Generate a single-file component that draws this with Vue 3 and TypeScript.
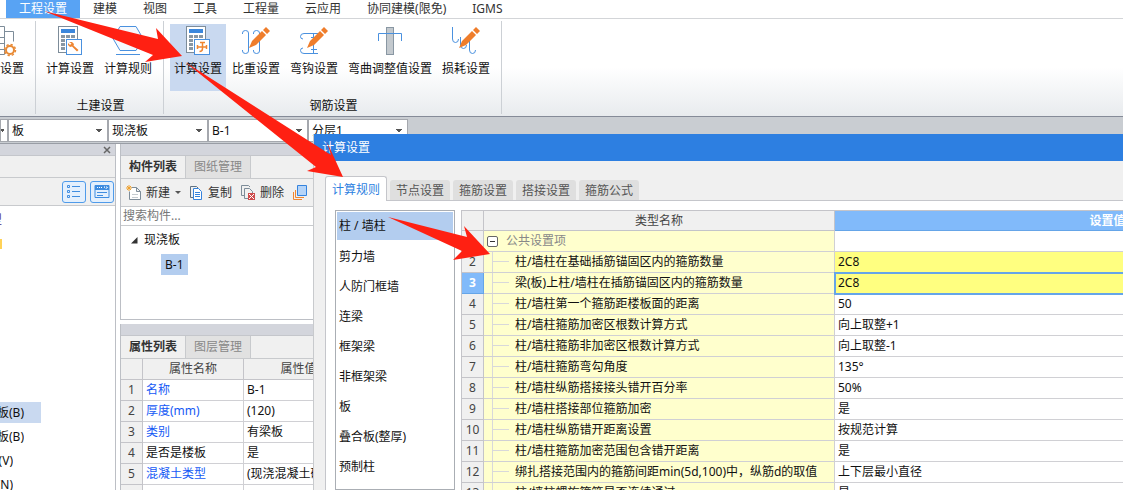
<script setup lang="ts">
import { ref } from 'vue'

const menus = ['工程设置', '建模', '视图', '工具', '工程量', '云应用', '协同建模(限免)', 'IGMS']
const combos = ['板', '现浇板', 'B-1', '分层1']
const members = ['柱 / 墙柱', '剪力墙', '人防门框墙', '连梁', '框架梁', '非框架梁', '板', '叠合板(整厚)', '预制柱']
const dialogTabs = ['计算规则', '节点设置', '箍筋设置', '搭接设置', '箍筋公式']
const activeTab = ref(0)
const activeMember = ref(0)
const search = ref('')

interface Prop { name: string; value: string; link: boolean }
const props: Prop[] = [
  { name: '名称', value: 'B-1', link: true },
  { name: '厚度(mm)', value: '(120)', link: true },
  { name: '类别', value: '有梁板', link: true },
  { name: '是否是楼板', value: '是', link: false },
  { name: '混凝土类型', value: '(现浇混凝土碎石)', link: true },
]

interface Rule { no: number; name: string; value: string }
const rules: Rule[] = [
  { no: 2, name: '柱/墙柱在基础插筋锚固区内的箍筋数量', value: '2C8' },
  { no: 3, name: '梁(板)上柱/墙柱在插筋锚固区内的箍筋数量', value: '2C8' },
  { no: 4, name: '柱/墙柱第一个箍筋距楼板面的距离', value: '50' },
  { no: 5, name: '柱/墙柱箍筋加密区根数计算方式', value: '向上取整+1' },
  { no: 6, name: '柱/墙柱箍筋非加密区根数计算方式', value: '向上取整-1' },
  { no: 7, name: '柱/墙柱箍筋弯勾角度', value: '135°' },
  { no: 8, name: '柱/墙柱纵筋搭接接头错开百分率', value: '50%' },
  { no: 9, name: '柱/墙柱搭接部位箍筋加密', value: '是' },
  { no: 10, name: '柱/墙柱纵筋错开距离设置', value: '按规范计算' },
  { no: 11, name: '柱/墙柱箍筋加密范围包含错开距离', value: '是' },
  { no: 12, name: '绑扎搭接范围内的箍筋间距min(5d,100)中，纵筋d的取值', value: '上下层最小直径' },
  { no: 13, name: '柱/墙柱螺旋箍筋是否连续通过', value: '是' },
]
</script>

<template>
  <div class="app">
    <nav class="menu">
      <button v-for="(m, i) in menus" :key="m" :class="{ on: i === 0 }">{{ m }}</button>
    </nav>

    <div class="ribbon">
      <section class="group first">
        <div class="tools">
          <button class="tool clipped">
            <svg width="48" height="30" viewBox="0 0 48 30" fill="none">
              <path d="M20 1.500h8.500v28H20M28.500 6.500h9v10M20 12.500h8M20 18.500h8M20 24.500h8" stroke="#7d8c99" />
              <circle cx="34" cy="25" r="4" fill="#fff" stroke="#e88a35" stroke-width="2" />
              <circle cx="34" cy="25" r="5.500" stroke="#e88a35" stroke-width="1.500" stroke-dasharray="2.300 2" />
            </svg>
            <span>设置</span>
          </button>
        </div>
      </section>

      <section class="group civil">
        <div class="tools">
          <button class="tool">
            <svg width="30" height="30" viewBox="0 0 30 30">
              <rect x="3.500" y="1.500" width="19" height="26" fill="#fff" stroke="#7d8c99" />
              <rect x="6" y="4" width="14" height="4" fill="#3b87dc" />
              <path d="M6 10h4v3H6zM11 10h4v3h-4zM16 10h4v3h-4zM6 14h4v3H6zM11 14h4v3h-4zM6 18h4v3H6zM6 22h4v3H6z" fill="#8997a3" />
              <rect x="11.500" y="14.500" width="15" height="15" fill="#fff" stroke="#4a91df" />
              <path d="M14 17l3 0 2 2-.5 1.500 5 4.500-1.500 1.500-5-5-2 .5-2-2 0-2 2 2 1.500-1.500z" fill="#ef8632" />
            </svg>
            <span>计算设置</span>
          </button>
          <button class="tool">
            <svg width="30" height="30" viewBox="0 0 30 30" fill="#f6f9fd" stroke="#4a91df">
              <path d="M7 1.500h16l7 12-7 12H7l-7-12z" /><path d="M3 29.500h24" />
            </svg>
            <span>计算规则</span>
          </button>
        </div>
        <h2>土建设置</h2>
      </section>

      <section class="group rebar">
        <div class="tools">
          <button class="tool on">
            <svg width="30" height="30" viewBox="0 0 30 30">
              <rect x="3.500" y="1.500" width="19" height="26" fill="#fff" stroke="#7d8c99" />
              <rect x="6" y="4" width="14" height="4" fill="#3b87dc" />
              <path d="M6 10h4v3H6zM11 10h4v3h-4zM16 10h4v3h-4zM6 14h4v3H6zM11 14h4v3h-4zM6 18h4v3H6zM6 22h4v3H6z" fill="#8997a3" />
              <rect x="11.500" y="14.500" width="15" height="15" fill="#fff" stroke="#4a91df" />
              <path d="M14 22h10M19.500 17.500v6q0 3-3 3M17 17.500h5M14.500 20v4M23.500 20v4" fill="none" stroke="#ef8632" stroke-width="1.500" />
            </svg>
            <span>计算设置</span>
          </button>
          <button class="tool">
            <svg width="30" height="30" viewBox="0 0 30 30" fill="none">
              <path d="M1.500 9V8q0-2.500 3-2.500t3 2.500v18q0 2.500-3 2.500t-3-2.500v-1M12.500 9V8q0-2.500 3-2.500t3 2.500v18q0 2.500-3 2.500t-3-2.500v-1" stroke="#4a91df" />
              <path d="M8 23l3-7L21 6l4 4-10 10zM22 5l3-3 4 4-3 3z" fill="#ef7d2b" />
            </svg>
            <span>比重设置</span>
          </button>
          <button class="tool">
            <svg width="30" height="30" viewBox="0 0 30 30" fill="none">
              <path d="M4 14q-2.500 0-2.500-2.500 0-3 3.500-3h14M4 23q-2.500 0-2.500 2.500 0 3 3.500 3h14M14.500 8v20M12 12.500h6M12 24.500h6" stroke="#4a91df" />
              <path d="M8 23l3-7L21 6l4 4-10 10zM22 5l3-3 4 4-3 3z" fill="#ef7d2b" />
            </svg>
            <span>弯钩设置</span>
          </button>
          <button class="tool">
            <svg width="30" height="30" viewBox="0 0 30 30" fill="none">
              <rect x="11.500" y="2.500" width="7" height="27" fill="#c3c9ce" stroke="#8997a3" />
              <path d="M3.500 16V8.500h23V16" stroke="#4a91df" />
            </svg>
            <span>弯曲调整值设置</span>
          </button>
          <button class="tool">
            <svg width="30" height="30" viewBox="0 0 30 30" fill="none">
              <path d="M1.500 2v12q0 3.500 3 3.500t3-3.500M9.500 12v8q0 3.500 3 3.500t3-3.500M18.500 15v10q0 3.500 3 3.500t3-3.500" stroke="#4a91df" />
              <path d="M8 23l3-7L21 6l4 4-10 10zM22 5l3-3 4 4-3 3z" fill="#ef7d2b" />
            </svg>
            <span>损耗设置</span>
          </button>
        </div>
        <h2>钢筋设置</h2>
      </section>
    </div>

    <div class="combos">
      <select class="stub" aria-label="楼层"><option></option></select>
      <select v-for="c in combos" :key="c" :aria-label="c"><option>{{ c }}</option></select>
    </div>

    <main class="work">
      <aside class="nav-panel">
        <div class="bar">
          <button aria-label="关闭">
            <svg width="6" height="6" viewBox="0 0 6 6" stroke="#666" stroke-width="1.500"><path d="M0 0l6 6M6 0L0 6" /></svg>
          </button>
        </div>
        <div class="strip"></div>
        <div class="view-tools">
          <button aria-label="列表">
            <svg width="14" height="14" viewBox="0 0 14 14" fill="none" stroke="#3f8de0">
              <path d="M.5.5h2v2h-2zM.5 5.500h2v2h-2zM.5 10.500h2v2h-2zM5 1.500h8M5 6.500h8M5 11.500h8" />
            </svg>
          </button>
          <button aria-label="视图">
            <svg width="16" height="14" viewBox="0 0 16 14" fill="none">
              <path d="M1 .5h14v12H1z" stroke="#3f8de0" /><path d="M1 0h14v5H1z" fill="#3f8de0" />
              <path d="M3 7.500h10M3 10.500h6" stroke="#3f8de0" /><path d="M3 2.500h5M10 2h4l-2 2z" stroke="#fff" stroke-dasharray="1 1" />
            </svg>
          </button>
        </div>
        <ul class="nav-top">
          <li class="cut tiny purple"><span>型</span></li>
          <li class="cut tiny"><i></i></li>
        </ul>
        <ul class="nav-tree">
          <li class="on"><span class="cut">板(B)</span></li>
          <li><span class="cut">板(B)</span></li>
          <li><span class="cut short">(V)</span></li>
          <li><span class="cut short">(N)</span></li>
        </ul>
      </aside>

      <div class="middle">
        <section class="panel list">
          <div class="bar"></div>
          <div class="tabs"><button class="on">构件列表</button><button>图纸管理</button></div>
          <div class="tool-row">
            <button>
              <svg width="16" height="16" viewBox="0 0 16 16" fill="none">
                <path d="M5.500 2.500h5l4 4v8h-11v-8M10.500 2.500v4h4" fill="#fff" stroke="#7d8c99" />
                <path d="M6 9.500h6M6 12.500h6" stroke="#c5cbd0" /><path d="M3 0v6M0 3h6M1 1l4 4M5 1L1 5" stroke="#efa12f" />
              </svg>新建<b class="caret"></b>
            </button>
            <button>
              <svg width="14" height="16" viewBox="0 0 14 16" fill="none">
                <path d="M3 12.500H.5v-11h6L8 3" stroke="#5f7182" /><path d="M3.500 3.500h5l3 3v8h-8z" fill="#fff" stroke="#3583dd" />
                <path d="M5 7.500h5M5 9.500h5M5 11.500h5" stroke="#3583dd" />
              </svg>复制
            </button>
            <button>
              <svg width="15" height="16" viewBox="0 0 15 16" fill="none">
                <path d="M3 10.500H.5v-10h7L9 2M7 13.500H3.500v-10h5l3 3v2" stroke="#7d8c99" />
                <path d="M7 8h7v7H7z" fill="#cf4b4b" /><path d="M8 9l5 5M13 9l-5 5" stroke="#fff" />
              </svg>删除
            </button>
            <button aria-label="层间复制">
              <svg width="14" height="15" viewBox="0 0 14 15" fill="none">
                <path d="M.5 7v7.500H9M2.500 5v7.500H11" stroke="#ef8632" /><path d="M4.500.5h9v10h-9z" fill="#b5d4f8" stroke="#3583dd" />
              </svg>
            </button>
          </div>
          <input v-model="search" placeholder="搜索构件..." aria-label="搜索构件" />
          <div class="tree">
            <div class="parent"><svg width="7" height="7" viewBox="0 0 7 7"><path d="M6.500 0v6.500H0z" fill="#333" /></svg>现浇板</div>
            <div><span class="leaf">B-1</span></div>
          </div>
        </section>

        <section class="panel attrs">
          <div class="bar"></div>
          <div class="tabs"><button class="on">属性列表</button><button>图层管理</button></div>
          <table class="grid">
            <colgroup><col class="c-no" /><col class="c-prop" /><col class="c-pval" /></colgroup>
            <thead><tr><th></th><th>属性名称</th><th>属性值</th></tr></thead>
            <tbody>
              <tr v-for="(p, i) in props" :key="p.name">
                <th>{{ i + 1 }}</th><td :class="{ link: p.link }">{{ p.name }}</td><td>{{ p.value }}</td>
              </tr>
              <tr><th></th><td></td><td></td></tr>
            </tbody>
          </table>
        </section>
      </div>
    </main>

    <div class="dialog" role="dialog" aria-labelledby="dlg-title">
      <h1 id="dlg-title">计算设置</h1>
      <div class="dlg-body">
        <div class="dlg-tabs">
          <button v-for="(t, i) in dialogTabs" :key="t" :class="{ on: i === activeTab }" @click="activeTab = i">{{ t }}</button>
        </div>
        <div class="page">
          <ul class="members">
            <li v-for="(m, i) in members" :key="m">
              <button :class="{ on: i === activeMember }" @click="activeMember = i">{{ m }}</button>
            </li>
          </ul>
          <div class="rules-wrap">
            <table class="grid rules">
              <colgroup><col class="c-no" /><col class="c-rule" /><col class="c-val" /></colgroup>
              <thead><tr><th></th><th>类型名称</th><th class="sel">设置值</th></tr></thead>
              <tbody>
                <tr>
                  <th></th>
                  <td class="section"><button aria-label="折叠"></button>公共设置项</td>
                  <td></td>
                </tr>
                <tr v-for="r in rules" :key="r.no" :class="{ changed: r.no < 4, current: r.no === 3 }">
                  <th>{{ r.no }}</th><td class="rule">{{ r.name }}</td><td>{{ r.value }}</td>
                </tr>
              </tbody>
            </table>
          </div>
        </div>
      </div>
    </div>

    <svg class="arrows" width="520" height="270" viewBox="0 0 520 270" fill="#ff2012">
      <path d="M44 11L158 39 156 28 182 56 145 62 153 55z" />
      <path d="M185 62L331 155 327 142 343 177 307 171 316 167z" />
      <path d="M388 217L467 237 464 226 490 254 453 260 462 251z" />
    </svg>
  </div>
</template>

<style>
html, body { margin: 0; overflow: hidden; }
</style>

<style scoped>
.app {
  position: relative; display: flex; flex-direction: column; height: 100vh; overflow: hidden;
  font: 12px/20px "Noto Sans", "Noto Sans CJK SC", sans-serif; color: #111; background: #fff;
}
.app * { box-sizing: border-box; }
button, input, select { font: inherit; color: inherit; margin: 0; padding: 0; border: 0; background: none; border-radius: 0; }
ul { list-style: none; margin: 0; padding: 0; }
h1, h2 { font: inherit; margin: 0; }
svg { flex: none; overflow: visible; }

.menu { display: flex; flex: none; height: 19px; padding-left: 6px; border-bottom: 1px solid #d3d5d8; }
.menu button { padding: 0 13px; line-height: 18px; white-space: nowrap; color: #333; }
.menu .on { background: #58a3f4; color: #fff; }

.ribbon { display: flex; flex: none; height: 98px; background: linear-gradient(#fff 50%, #e8ebee); border-bottom: 1px solid #858b98; }
.group { display: flex; flex-direction: column; align-items: center; margin: 2px 0; padding: 3px 6px 0; border-right: 1px solid #ccd0d5; }
.group.first { width: 36px; align-items: flex-end; padding: 3px 11px 0 0; }
.group.civil { padding-right: 7px; }
.group.rebar { padding-right: 7px; }
.tools { display: flex; gap: 2px; }
.tool { display: flex; flex-direction: column; align-items: center; height: 67px; padding: 1px 4px 0; white-space: nowrap; }
.tool span { margin-top: 4px; }
.tool.clipped { align-items: flex-end; padding: 1px 0 0; }
.tool.on { background: #c9d9f0; }
.group h2 { margin-top: 5px; padding-left: 3px; }

.combos { display: flex; flex: none; height: 27px; padding-top: 2px; background: #c9cdd2; border-bottom: 1px solid #999da5; }
.combos select {
  width: 100px; height: 23px; padding: 1px 3px 0; border: 1px solid #a5a8ae; appearance: none; line-height: 20px;
  background: conic-gradient(from -45deg at 50% 100%, #555 90deg, transparent 0) no-repeat right 5px center / 6px 3px #fff;
}
.combos .stub { width: 8px; background-position: left 0 center; background-size: 3px 3px; }

.work { display: flex; flex: 1; min-height: 0; background: #fff; }
.bar { flex: none; height: 12px; background: #d3d5dc; border-bottom: 1px solid #c4c6cb; display: flex; justify-content: flex-end; }
.bar button { display: flex; align-items: center; justify-content: center; width: 16px; }

.nav-panel { width: 116px; flex: none; border-right: 1px solid #bcbfc5; display: flex; flex-direction: column; overflow: hidden; }
.strip { height: 22px; flex: none; background: #f0f0f0; border-bottom: 1px solid #c8cacd; }
.view-tools { display: flex; flex: none; justify-content: flex-end; gap: 4px; height: 28px; padding: 3px 1px 2px; background: #f0f0f0; border-bottom: 1px solid #c8cacd; }
.view-tools button { display: flex; align-items: center; justify-content: center; width: 24px; height: 22px; border: 1px solid #4f9bea; border-radius: 3px; background: #e4f0fd; }
.cut { display: flex; justify-content: flex-end; width: 24px; overflow: hidden; white-space: nowrap; }
.cut.short { width: 13px; }
.nav-top { padding-top: 4px; height: 196px; flex: none; }
.nav-top li { height: 24px; }
.cut.tiny { width: 2px; }
.purple { color: #4a2c7a; }
.tiny i { width: 2px; height: 10px; margin-top: 5px; background: #ffd257; }
.nav-tree li { height: 24px; line-height: 21px; }
.nav-tree .on .cut { width: 41px; padding-right: 17px; background: #c9d9f0; }

.middle { display: flex; flex-direction: column; gap: 4px; flex: 1; min-width: 0; padding-left: 4px; }
.panel { border-left: 1px solid #bcbfc5; display: flex; flex-direction: column; }
.list { height: 176px; flex: none; border-bottom: 1px solid #bcbfc5; }
.tabs { display: flex; flex: none; height: 23px; background: #f0f0f0; border-bottom: 1px solid #c8cacd; }
.tabs button { padding: 0 8px; border-right: 1px solid #c8cacd; line-height: 22px; color: #888; background: #e1e1e1; }
.tabs .on { font-weight: 700; color: #333; background: #f0f0f0; }
.tool-row { display: flex; align-items: center; flex: none; height: 28px; padding-left: 5px; gap: 9px; background: #f0f0f0; border-bottom: 1px solid #c8cacd; }
.tool-row button { display: flex; align-items: center; gap: 4px; color: #333; }
.caret { margin-left: 1px; border: 3px solid transparent; border-top-color: #555; border-bottom: 0; }
.panel input { flex: none; width: 100%; height: 19px; padding: 0 2px; border-bottom: 1px solid #c8cacd; outline: 0; background: #fff; }
.panel input::placeholder { color: #777; opacity: 1; }
.tree { padding: 4px 10px; }
.tree div { height: 24px; }
.tree .parent { display: flex; align-items: center; gap: 6px; height: 20px; margin-bottom: 4px; }
.leaf { display: inline-block; margin-left: 30px; padding: 0 4px; line-height: 21px; background: #b3cdef; }

.grid { border-collapse: separate; border-spacing: 0; table-layout: fixed; line-height: 20px; }
.grid th, .grid td { height: 21px; padding: 0 3px; border: solid #d0d0d4; border-width: 0 1px 1px 0; white-space: nowrap; overflow: hidden; text-align: left; }
.grid th { background: #f0f0f0; border-color: #c4c4c9; text-align: center; font-weight: 400; color: #444; padding: 0; }
.grid .c-no { width: 22px; }
.grid .c-prop { width: 101px; }
.grid .c-pval { width: 110px; }
.attrs .grid { width: 233px; }
.grid .link { color: #1559f5; }

.dialog { position: absolute; top: 134px; left: 313px; right: 0; bottom: 0; display: flex; flex-direction: column; background: #f0f0f0; border-left: 1px solid #c8cacd; }
.dialog h1 { flex: none; height: 27px; padding-left: 8px; line-height: 28px; background: #2d7fe1; color: #fff; }
.dlg-body { display: flex; flex-direction: column; flex: 1; min-height: 0; padding: 15px 0 0 11px; }
.dlg-tabs { display: flex; align-items: flex-end; gap: 3px; flex: none; height: 25px; border-bottom: 1px solid #c5c6cb; }
.dlg-tabs button { width: 60px; height: 20px; padding-top: 1px; border-radius: 3px 3px 0 0; background: #dfdfdf; color: #555; }
.dlg-tabs .on { width: 62px; height: 25px; margin-bottom: -1px; border: 1px solid #c5c6cb; border-bottom: 0; background: #fff; color: #2d7fe1; }
.page { display: flex; flex: 1; gap: 6px; min-height: 0; padding: 9px 0 0 9px; background: #fff; border-left: 1px solid #c5c6cb; }
.members { flex: none; width: 120px; padding: 1px; border: 1px solid #aaaeb4; }
.members button { display: block; width: 100%; height: 30px; padding: 0 2px; text-align: left; }
.members .on { height: 28px; margin-bottom: 2px; background: #b3cdef; }
.rules-wrap { flex: 1; min-width: 0; overflow: hidden; border: solid #c4c4c9; border-width: 1px 0 0 1px; }
.rules { width: 919px; }
.rules thead th { height: 20px; line-height: 19px; }
.rules .c-rule { width: 351px; }
.rules .c-val { width: 546px; }
.rules td:nth-child(2) { background: #ffffcd; }
.grid .sel { background: #81bafa; border-color: #65a5e8; color: #fff; font-weight: 700; }
.rules .section { color: #888; }
.section button { width: 11px; height: 11px; margin-right: 8px; border: 1px solid #666; border-radius: 2px; background: linear-gradient(#333, #333) no-repeat center / 5px 1px #fff; vertical-align: -1px; }
.rules td.rule {
  padding-left: 31px;
  background: linear-gradient(#d8d8da, #d8d8da) no-repeat 8px 0 / 1px 100%, linear-gradient(#d8d8da, #d8d8da) no-repeat 8px 9px / 17px 1px, #ffffcd;
}
.changed td:last-child { background: #ffff80; }
.current th { background: #81bafa; border-color: #65a5e8; color: #fff; font-weight: 700; }
.current td:last-child { outline: 2px solid #65a5e8; outline-offset: -1px; }

.arrows { position: absolute; top: 0; left: 0; pointer-events: none; }
</style>
